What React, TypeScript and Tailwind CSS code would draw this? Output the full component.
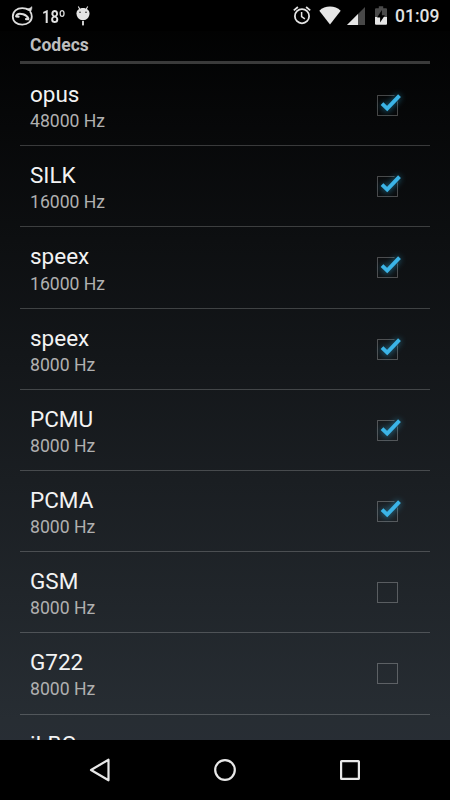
import React from "react";

type Codec = { name: string; rate: string; enabled: boolean };

const codecs: Codec[] = [
  { name: "opus", rate: "48000 Hz", enabled: true },
  { name: "SILK", rate: "16000 Hz", enabled: true },
  { name: "speex", rate: "16000 Hz", enabled: true },
  { name: "speex", rate: "8000 Hz", enabled: true },
  { name: "PCMU", rate: "8000 Hz", enabled: true },
  { name: "PCMA", rate: "8000 Hz", enabled: true },
  { name: "GSM", rate: "8000 Hz", enabled: false },
  { name: "G722", rate: "8000 Hz", enabled: false },
  { name: "iLBC", rate: "", enabled: false },
];

function CallIcon() {
  return (
    <svg width="23" height="20" viewBox="0 0 23 20" fill="none" stroke="#dedede">
      <path d="M18 4C16.2 2.7 13.9 2.1 11.3 2.1 5.8 2.1 1.8 5.3 1.8 10.4s4 8.3 9.5 8.3 9.5-3.3 9.5-8.3c0-1.9-.6-3.7-1.8-5" strokeWidth="1.8" />
      <path d="M15 2.9c2.4.1 4.5-.8 5.9-2.3.1 2.2-.3 3.7-1.5 5.1z" fill="#dedede" strokeWidth="0.5" />
      <path d="M5.2 10.1C6 7.6 9.3 7.4 12.2 8.3c2.7.8 4.4 2.3 5.2 4.4" strokeWidth="2" strokeLinecap="round" />
      <path d="M5.4 10.5l2.2.1M15 13.1l2.2.2" strokeWidth="2.1" strokeLinecap="round" />
    </svg>
  );
}

function RobotIcon() {
  return (
    <svg width="14" height="20" viewBox="0 0 14 20" fill="#e4e4e4">
      <path d="M2.3.6l1.5 2.7M11.7.6l-1.5 2.7" stroke="#e4e4e4" strokeWidth="1.1" />
      <path d="M.5 7.2C.6 4.2 3.4 2.1 7 2.1s6.4 2.1 6.5 5.1c0 4.1-2.7 7-6.5 7S.5 11.3.5 7.2z" />
      <rect x="6.1" y="15" width="1.8" height="4.4" />
      <circle cx="4" cy="6.2" r=".8" fill="#222" />
      <circle cx="10" cy="6.2" r=".8" fill="#222" />
    </svg>
  );
}

function AlarmIcon() {
  return (
    <svg width="18" height="19" viewBox="0 0 18 19" fill="none" stroke="#e4e4e4">
      <circle cx="9" cy="10.2" r="7.1" strokeWidth="1.8" />
      <path d="M.8 4.4L4.9 1M17.2 4.4L13.1 1" strokeWidth="1.8" />
      <path d="M8.6 6v4.6l3.3 2.3" strokeWidth="1.5" />
    </svg>
  );
}

function WifiIcon() {
  return (
    <svg width="22" height="19" viewBox="0 0 22 19" fill="#e6e6e6">
      <path d="M11 18.4L.3 4.7C3.2 2 6.9.6 11 .6s7.8 1.4 10.7 4.1z" />
    </svg>
  );
}

function SignalIcon() {
  return (
    <svg width="18" height="18" viewBox="0 0 18 18">
      <path d="M0 18L18 0v18z" fill="#484848" />
      <path d="M0 18L11 7v11z" fill="#e6e6e6" />
    </svg>
  );
}

function BatteryIcon() {
  return (
    <svg width="12" height="19" viewBox="0 0 12 19">
      <path d="M0 3.2q0-1 1-1h2.8V.3h4.4v1.9H11q1 0 1 1V11H0z" fill="#4a4a4a" />
      <path d="M0 11h12v6.8q0 .9-1 .9H1q-1 0-1-.9z" fill="#e6e6e6" />
      <path d="M6.9 4.1L2.1 11.4h3v5L9.9 9.3h-3z" fill="#000" />
    </svg>
  );
}

function StatusBar() {
  return (
    <header className="flex h-[31px] shrink-0 items-center bg-black pr-[10px] pl-[11px] text-[#e2e2e2]">
      <CallIcon />
      <span className="ml-[8px] w-[21px] origin-left scale-x-[0.82] pt-[2px] text-[18px] leading-[29px] font-semibold whitespace-nowrap">18º</span>
      <span className="ml-[13px]"><RobotIcon /></span>
      <div className="ml-auto flex items-center">
        <AlarmIcon />
        <span className="ml-[8px]"><WifiIcon /></span>
        <span className="ml-[6px]"><SignalIcon /></span>
        <span className="ml-[10px]"><BatteryIcon /></span>
        <span className="ml-[8px] w-[45px] pt-[2px] text-[17.5px] leading-[29px] font-medium whitespace-nowrap">01:09</span>
      </div>
    </header>
  );
}

function Checkbox({ checked }: { checked: boolean }) {
  return (
    <svg className="mt-[2px]" width="40" height="40" viewBox="0 0 40 40" fill="none">
      {checked ? (
        <>
          <path d="M26.5 9.5h-17v20h20V15.5" stroke="#fff" strokeOpacity=".26" />
          <path d="M14 18l5 5L31.5 9.7" stroke="#33b5e5" strokeWidth="5" className="opacity-50 blur-[3px]" />
          <path d="M14 17.6l5.2 5L31.5 9.7" stroke="#3bb4e7" strokeWidth="3.9" />
        </>
      ) : (
        <rect x="9.5" y="9.5" width="20" height="20" stroke="#fff" strokeOpacity=".26" />
      )}
    </svg>
  );
}

function CodecRow({ codec }: { codec: Codec }) {
  return (
    <li className="flex h-[81.2px] shrink-0 items-center border-b border-white/20 pr-[22px] pl-[10px]">
      <div className="flex-1 pt-[4.4px]">
        <div className="text-[22.5px] leading-[26.5px] text-[#f3f3f3]">{codec.name}</div>
        <div className="h-[26px] pt-[0.6px] text-[17.6px] leading-[26px] text-[#b0b0b0]">{codec.rate}</div>
      </div>
      <Checkbox checked={codec.enabled} />
    </li>
  );
}

function NavigationBar() {
  return (
    <nav className="flex h-[60px] shrink-0 items-center justify-center gap-[101px] bg-black">
      <svg width="24" height="26" viewBox="0 0 24 26" fill="none" stroke="#e8e8e8" strokeWidth="2.2">
        <path d="M20.5 2.7v20.6L3 13z" strokeLinejoin="round" />
      </svg>
      <svg width="24" height="24" viewBox="0 0 24 24" fill="none" stroke="#e8e8e8" strokeWidth="2.2">
        <circle cx="12" cy="12" r="9.8" />
      </svg>
      <svg width="24" height="24" viewBox="0 0 24 24" fill="none" stroke="#e8e8e8" strokeWidth="2.2">
        <rect x="3.1" y="3.1" width="17.8" height="17.8" rx=".5" />
      </svg>
    </nav>
  );
}

export default function App() {
  return (
    <div className="flex h-[800px] w-[450px] flex-col overflow-hidden bg-[linear-gradient(to_bottom,#000000_0%,#272d33_90%,#292d37_100%)] font-[Roboto,sans-serif]">
      <StatusBar />
      <main className="flex min-h-0 flex-1 flex-col overflow-hidden px-5">
        <h2 className="mb-px h-[33px] shrink-0 border-b-[3px] border-[#3a3a3a] pl-[10px] text-[17.5px] leading-[28px] font-bold text-[#bebebe]">Codecs</h2>
        <ul className="flex flex-col">
          {codecs.map((codec, index) => <CodecRow key={index} codec={codec} />)}
        </ul>
      </main>
      <NavigationBar />
    </div>
  );
}
